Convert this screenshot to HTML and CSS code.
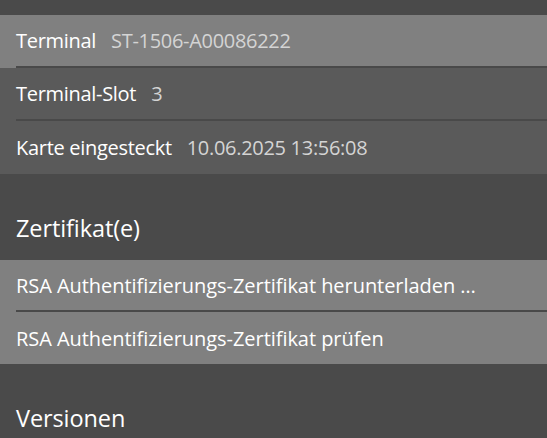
FILE: index.html
```html
<!DOCTYPE html>
<html lang="de">
<head>
    <meta charset="UTF-8">
    <meta name="viewport" content="width=device-width, initial-scale=1.0">
    <title>Karte</title>
    <link rel="stylesheet" href="styles.css">
</head>
<body>
    <div class="info">
        <div class="row active">
            <div class="row-inner"><span class="label">Terminal</span><span class="value">ST-1506-A00086222</span></div>
        </div>
        <div class="row">
            <div class="row-inner"><span class="label">Terminal-Slot</span><span class="value">3</span></div>
        </div>
        <div class="row">
            <div class="row-inner"><span class="label">Karte eingesteckt</span><span class="value">10.06.2025 13:56:08</span></div>
        </div>
    </div>

    <h2 class="section-title">Zertifikat(e)</h2>
    <div class="actions">
        <div class="row action">
            <div class="row-inner">RSA Authentifizierungs-Zertifikat herunterladen …</div>
        </div>
        <div class="row action">
            <div class="row-inner">RSA Authentifizierungs-Zertifikat prüfen</div>
        </div>
    </div>

    <h2 class="section-title">Versionen</h2>
</body>
</html>
```

FILE: styles.css
```css
body {
    margin: 0;
    background-color: #4a4a4a;
    font-family: "Open Sans", "Liberation Sans", sans-serif;
    color: #fff;
}
.info {
    margin-top: 15px;
}
.row {
    padding-left: 16px;
    background-color: #5a5a5a;
}
.row.active,
.row.action {
    background-color: #808080;
}
.row-inner {
    height: 51px;
    display: flex;
    align-items: center;
    border-bottom: 2px solid #494949;
    font-size: 20px;
    letter-spacing: -0.3px;
}
.row:last-child .row-inner {
    border-bottom: none;
    height: 53px;
}
.actions .row-inner {
    height: 50px;
    letter-spacing: -0.05px;
}
.actions .row:last-child .row-inner {
    height: 52px;
}
.label {
    margin-right: 15px;
}
.value {
    color: #d4d4d4;
}
.section-title {
    margin: 0;
    padding: 38px 16px 16px;
    line-height: 32px;
    font-size: 23.5px;
    font-weight: normal;
    letter-spacing: -0.1px;
}
```
